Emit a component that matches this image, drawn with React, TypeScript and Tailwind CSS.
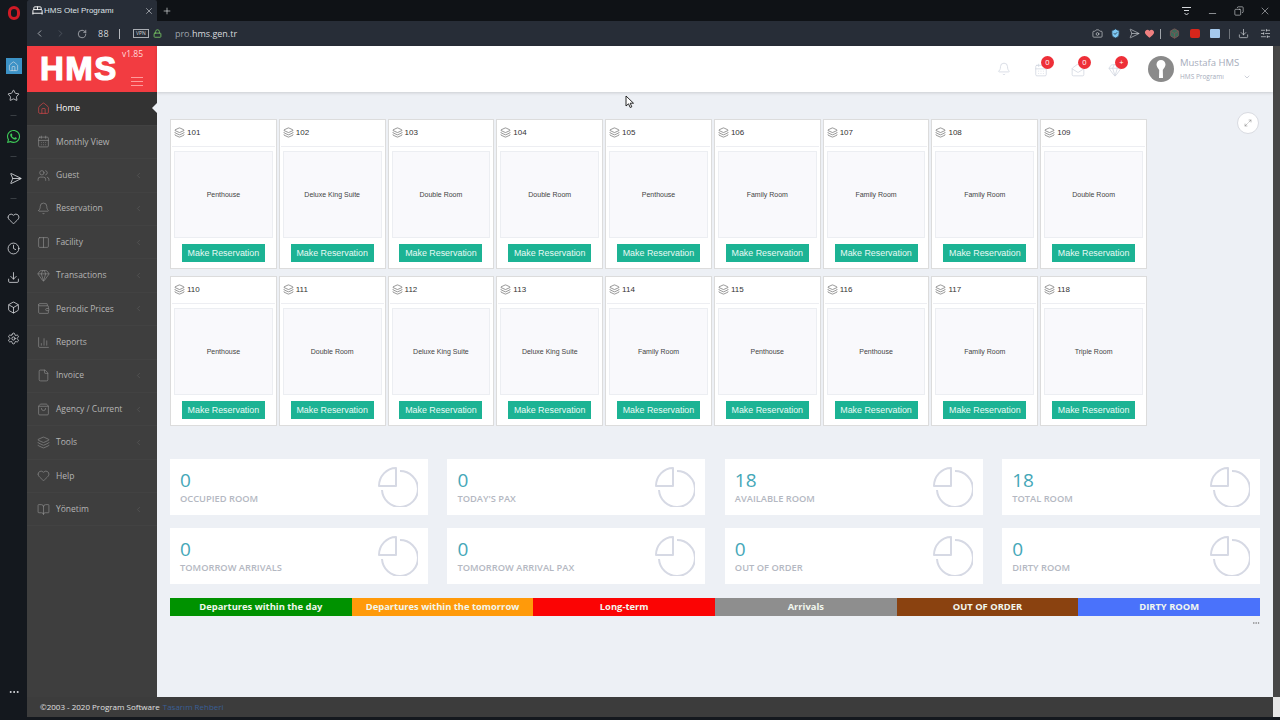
import React from "react";
import {
  Home, CalendarDays, Users, Bell, Columns2, Gem, Wallet, BarChart3, File, ShoppingBag, Layers, Heart, BookOpen, ChevronLeft, ChevronRight, ChevronDown, RotateCw, Lock, X, Plus, Minus, Copy, Star, Send, Clock, Download, Box, Settings, Camera, ShieldCheck, SlidersHorizontal, MailOpen, Maximize2, BedDouble, MoreHorizontal,
} from "lucide-react";
import { FaWhatsapp } from "react-icons/fa";

const rooms: [string, string][] = [
  ["101", "Penthouse"], ["102", "Deluxe King Suite"], ["103", "Double Room"], ["104", "Double Room"], ["105", "Penthouse"], ["106", "Family Room"], ["107", "Family Room"], ["108", "Family Room"], ["109", "Double Room"],
  ["110", "Penthouse"], ["111", "Double Room"], ["112", "Deluxe King Suite"], ["113", "Deluxe King Suite"], ["114", "Family Room"], ["115", "Penthouse"], ["116", "Penthouse"], ["117", "Family Room"], ["118", "Triple Room"],
];

const menu: [React.ElementType, string, boolean][] = [
  [Home, "Home", false],
  [CalendarDays, "Monthly View", false],
  [Users, "Guest", true],
  [Bell, "Reservation", true],
  [Columns2, "Facility", true],
  [Gem, "Transactions", true],
  [Wallet, "Periodic Prices", true],
  [BarChart3, "Reports", false],
  [File, "Invoice", true],
  [ShoppingBag, "Agency / Current", true],
  [Layers, "Tools", true],
  [Heart, "Help", false],
  [BookOpen, "Yönetim", true],
];

const stats: [string, string][] = [
  ["0", "OCCUPIED ROOM"], ["0", "TODAY'S PAX"], ["18", "AVAILABLE ROOM"], ["18", "TOTAL ROOM"],
  ["0", "TOMORROW ARRIVALS"], ["0", "TOMORROW ARRIVAL PAX"], ["0", "OUT OF ORDER"], ["0", "DIRTY ROOM"],
];

const legend: [string, string][] = [
  ["Departures within the day", "bg-[#009200]"],
  ["Departures within the tomorrow", "bg-[#ff9a0a]"],
  ["Long-term", "bg-[#fb0404]"],
  ["Arrivals", "bg-[#8e8e8e]"],
  ["OUT OF ORDER", "bg-[#8a4210]"],
  ["DIRTY ROOM", "bg-[#4a72fb]"],
];

function Pie() {
  return (
    <svg width="40" height="40" viewBox="0 0 40 40" fill="none" stroke="#d6d9e4" strokeWidth="2" strokeLinejoin="round">
      <path d="M22 4A18 18 0 1 1 4 23" />
      <path d="M18 1V19H1C1 9.5 8.500 1 18 1Z" />
    </svg>
  );
}

function Badge({ text }: { text: string }) {
  return (
    <span className="absolute -top-[7px] left-[7px] flex h-[13px] w-[13px] items-center justify-center rounded-full bg-[#ee2f38] text-[7.5px] leading-none text-white">
      {text}
    </span>
  );
}

export default function App() {
  return (
    <div className="relative flex h-[720px] w-[1280px] overflow-hidden bg-[#14181e] font-['Open_Sans',sans-serif]">
      {/* Opera sidebar */}
      <div className="flex w-[27px] shrink-0 flex-col items-center text-[#e4e6ea]">
        <div className="mt-[6px] flex h-[14px] w-[12px] items-center justify-center rounded-full border-[3px] border-[#d01a25]" />
        <div className="mt-[38px] flex h-[16px] w-[16px] items-center justify-center bg-[#3c92c6]">
          <Home size={11} strokeWidth={1.3} />
        </div>
        <Star size={13} strokeWidth={1.4} className="mt-[15px]" />
        <Minus size={9} strokeWidth={1} className="mt-[9px] text-[#7a7e84]" />
        <FaWhatsapp size={15} className="mt-[9px] text-[#3ecb58]" />
        <Minus size={9} strokeWidth={1} className="mt-[8px] text-[#7a7e84]" />
        <Send size={13} strokeWidth={1.4} className="mt-[11px] rotate-45" />
        <Minus size={9} strokeWidth={1} className="mt-[9px] text-[#7a7e84]" />
        <Heart size={13} strokeWidth={1.4} className="mt-[9px]" />
        <Clock size={13} strokeWidth={1.4} className="mt-[17px]" />
        <Download size={13} strokeWidth={1.4} className="mt-[16px]" />
        <Box size={13} strokeWidth={1.4} className="mt-[17px]" />
        <Settings size={13} strokeWidth={1.4} className="mt-[18px]" />
        <MoreHorizontal size={12} strokeWidth={2} className="mt-[341px]" />
      </div>

      <div className="flex min-w-0 flex-1 flex-col">
        {/* Tab strip */}
        <div className="flex h-[21px] shrink-0 items-center bg-[#0f1216] text-[#dfe2e6]">
          <div className="flex h-full w-[130px] items-center rounded-t-[2px] bg-[#272d37] pl-[5px]">
            <BedDouble size={11} strokeWidth={2} className="text-white" />
            <span className="ml-[1px] w-[100px] font-['Liberation_Sans',sans-serif] text-[8px] whitespace-nowrap">HMS Otel Programı</span>
            <X size={10} strokeWidth={1.4} />
          </div>
          <Plus size={10} strokeWidth={1.6} className="ml-[5px]" />
          <svg width="11" height="10" viewBox="0 0 11 10" fill="none" stroke="#d5d8dc" strokeWidth="1" className="ml-[1009px]">
            <path d="M1 1.500H10M3 4.500H8M3.500 7L5.500 9L7.500 7" />
          </svg>
          <Minus size={11} strokeWidth={1.3} className="ml-[15px] translate-y-[3px]" />
          <Copy size={10} strokeWidth={1.4} className="ml-[16px] -scale-x-100" />
          <X size={12} strokeWidth={1.1} className="ml-[15px]" />
        </div>

        {/* Address bar */}
        <div className="flex h-[25px] shrink-0 items-center bg-[#272d37] text-[#d3d6da]">
          <ChevronLeft size={11} strokeWidth={1.5} className="ml-[7px]" />
          <ChevronRight size={11} strokeWidth={1.5} className="ml-[10px] text-[#5c626c]" />
          <RotateCw size={10} strokeWidth={1.5} className="ml-[11px]" />
          <span className="ml-[11px] text-[9px] tracking-[0.3px]">88</span>
          <span className="ml-[10px] h-[10px] w-px bg-[#b5b8bd]" />
          <span className="ml-[13px] flex h-[9px] w-[16px] items-center justify-center border border-[#a9adb3] text-[5px] leading-none">VPN</span>
          <Lock size={9} strokeWidth={2.4} className="ml-[4px] text-[#74bf62]" />
          <span className="ml-[13px] text-[9px] whitespace-nowrap text-[#9ea3aa]">
            pro.<span className="text-[#d8dade]">hms.gen.tr</span>
          </span>
          <Camera size={11} strokeWidth={1.4} className="ml-[855px]" />
          <ShieldCheck size={11} strokeWidth={2} fill="#7cc7f2" className="ml-[7px] text-[#2a3a4a]" />
          <Send size={11} strokeWidth={1.3} className="ml-[6px] rotate-45" />
          <Heart size={11} fill="#f08080" strokeWidth={0} className="ml-[6px]" />
          <span className="ml-[5px] h-[10px] w-px bg-[#a0a4aa]" />
          <Box size={11} strokeWidth={2} className="ml-[8px] text-[#7a5555]" fill="#3d6b5a" />
          <span className="ml-[10px] h-[9px] w-[10px] rounded-[2px] bg-[#d7261b]" />
          <span className="ml-[10px] h-[9px] w-[10px] rounded-[1px] bg-[#a5c9ec]" />
          <span className="ml-[9px] h-[10px] w-px bg-[#6f747b]" />
          <Download size={11} strokeWidth={1.5} className="ml-[8px]" />
          <SlidersHorizontal size={11} strokeWidth={1.5} className="ml-[11px]" />
        </div>

        {/* Page */}
        <div className="flex min-h-0 flex-1">
          {/* App sidebar */}
          <aside className="flex w-[130px] shrink-0 flex-col bg-[#3e3e3e]">
            <div className="relative flex h-[46.400px] shrink-0 bg-[#f23c41] text-white">
              <span className="mt-[5px] ml-[13px] font-['Liberation_Sans',sans-serif] text-[33px] leading-[36px] font-black tracking-[1.5px] [-webkit-text-stroke:1.2px_white]">
                HMS
              </span>
              <span className="absolute top-[2px] right-[14px] text-[8.500px] text-[#ffd9d9]">v1.85</span>
              <div className="absolute top-[31px] right-[14px] flex w-[12px] flex-col gap-[3px]">
                <span className="h-px bg-[#ff9b9b]" />
                <span className="h-px bg-[#ff9b9b]" />
                <span className="h-px bg-[#ff9b9b]" />
              </div>
            </div>
            {menu.map(([Icon, label, arrow], i) => (
              <div
                key={label}
                className={
                  "relative flex h-[33.400px] shrink-0 items-center border-b border-[#424242] pl-[10px] " +
                  (i === 0 ? "bg-[#333333] text-white" : "text-[#b4b4b4]")
                }
              >
                <Icon size={13} strokeWidth={1.2} className={i === 0 ? "text-[#e0494a]" : "text-[#8f8f8f]"} />
                <span className="ml-[6px] text-[8.500px] whitespace-nowrap">{label}</span>
                {arrow && <ChevronLeft size={9} strokeWidth={1} className="absolute right-[14px] text-[#6d6d6d]" />}
                {i === 0 && <span className="absolute top-[11px] right-0 h-0 w-0 border-y-[5px] border-r-[5px] border-y-transparent border-r-[#edf0f5]" />}
              </div>
            ))}
          </aside>

          {/* Main column */}
          <main className="relative flex min-w-0 flex-1 flex-col bg-[#edf0f5]">
            <header className="flex h-[46px] shrink-0 items-center bg-white shadow-[0_1px_3px_rgba(0,0,0,0.15)]">
              <Bell size={14} strokeWidth={1.2} className="ml-[840px] text-[#ccd1dc]" />
              <div className="relative mt-[2px] ml-[23px] text-[#ccd1dc]">
                <CalendarDays size={14} strokeWidth={1.2} />
                <Badge text="0" />
              </div>
              <div className="relative mt-[2px] ml-[23px] text-[#ccd1dc]">
                <MailOpen size={14} strokeWidth={1.2} />
                <Badge text="0" />
              </div>
              <div className="relative mt-[2px] ml-[23px] text-[#ccd1dc]">
                <Gem size={14} strokeWidth={1.2} />
                <Badge text="+" />
              </div>
              <div className="ml-[26px] flex h-[26px] w-[26px] items-center justify-center rounded-full bg-[#8a8a8a]">
                <svg width="10" height="18" viewBox="0 0 10 18" fill="#fff">
                  <path d="M5 0C7.500 0 9.500 2 9.500 4.500C9.500 6.800 7.800 8.500 6.800 10L7 18H3L3.200 10C2.200 8.500 .5 6.800 .5 4.500C.5 2 2.500 0 5 0Z" />
                </svg>
              </div>
              <div className="ml-[6px] w-[72px] text-[#a6acbb]">
                <div className="text-[9.500px] leading-[14px] whitespace-nowrap">Mustafa HMS</div>
                <div className="mt-[2px] flex items-center text-[6.500px] whitespace-nowrap">
                  HMS Programı
                  <ChevronDown size={8} strokeWidth={1.3} className="ml-[19px] text-[#8d94a5]" />
                </div>
              </div>
            </header>

            <div className="flex min-h-0 flex-1 flex-col pt-[27px] pr-[13px] pl-[13px]">
              <div className="grid w-[977px] grid-cols-9 gap-x-[2px] gap-y-[7px]">
                {rooms.map(([num, type]) => (
                  <div key={num} className="flex h-[150px] flex-col border border-[#dcdcdc] bg-white">
                    <div className="mx-[1px] flex h-[27px] shrink-0 items-center border-b border-[#edeef2] pb-[1px] pl-[2px]">
                      <Layers size={11} strokeWidth={1.2} className="text-[#444]" />
                      <span className="ml-[2px] font-['Liberation_Sans',sans-serif] text-[8px] text-[#333]">{num}</span>
                    </div>
                    <div className="mx-[3px] mt-[4px] flex h-[87px] shrink-0 items-center justify-center border border-[#eceef2] bg-[#f9f9fc] pt-[1px]">
                      <span className="font-['Liberation_Sans',sans-serif] text-[7px] whitespace-nowrap text-[#444]">{type}</span>
                    </div>
                    <div className="mt-[6px] flex h-[18px] w-[83px] shrink-0 items-center justify-center self-center bg-[#1cb394] pt-[1px]">
                      <span className="font-['Liberation_Sans',sans-serif] text-[8.900px] whitespace-nowrap text-[#e8faf5]">Make Reservation</span>
                    </div>
                  </div>
                ))}
              </div>

              <div className="mt-[33px] grid grid-cols-4 gap-x-[19.670px] gap-y-[13px]">
                {stats.map(([n, label]) => (
                  <div key={label} className="flex h-[56px] items-center justify-between bg-white pr-[10px] pl-[10px]">
                    <div className="flex flex-col">
                      <span className="-mt-[1px] text-[19px] leading-[24px] text-[#45a7b8]">{n}</span>
                      <span className="mt-[1px] text-[9.300px] leading-[12px] font-semibold whitespace-nowrap text-[#b4b8c2]">{label}</span>
                    </div>
                    <Pie />
                  </div>
                ))}
              </div>

              <div className="mt-[14px] grid grid-cols-6">
                {legend.map(([t, c]) => (
                  <div key={t} className={"flex h-[18px] items-center justify-center text-[9.400px] font-bold whitespace-nowrap text-[#f2f7ee] " + c}>
                    {t}
                  </div>
                ))}
              </div>
              <div className="mt-[3px] flex justify-end">
                <MoreHorizontal size={8} strokeWidth={2} className="text-[#777]" />
              </div>
            </div>

            <div className="absolute top-[66px] right-[14px] flex h-[22px] w-[22px] items-center justify-center rounded-full border border-[#d9dbe1] bg-white">
              <Maximize2 size={8} strokeWidth={1.4} className="text-[#777]" />
            </div>
          </main>

          <div className="w-[7px] shrink-0 bg-[#474747]" />
        </div>

        {/* Footer */}
        <div className="flex h-[20px] shrink-0 items-center bg-[#3c3c3c]">
          <span className="ml-[13px] text-[8px] whitespace-nowrap text-[#e0e0e0]">
            ©2003 - 2020 Program Software <span className="ml-[1px] text-[#3a5f96]">Tasarım Rehberi</span>
          </span>
          <span className="ml-auto h-full w-[7px] bg-[#e6e6e6]" />
        </div>
        <div className="h-[3px] shrink-0 bg-[#14181e]" />
      </div>

      <svg width="10" height="14" viewBox="0 0 10 14" className="absolute top-[95px] left-[625px]">
        <path d="M1 1V11L3.500 8.800L5.200 12.500L6.800 11.800L5.200 8.200H8.500Z" fill="#fff" stroke="#111" strokeWidth="0.9" />
      </svg>
    </div>
  );
}
